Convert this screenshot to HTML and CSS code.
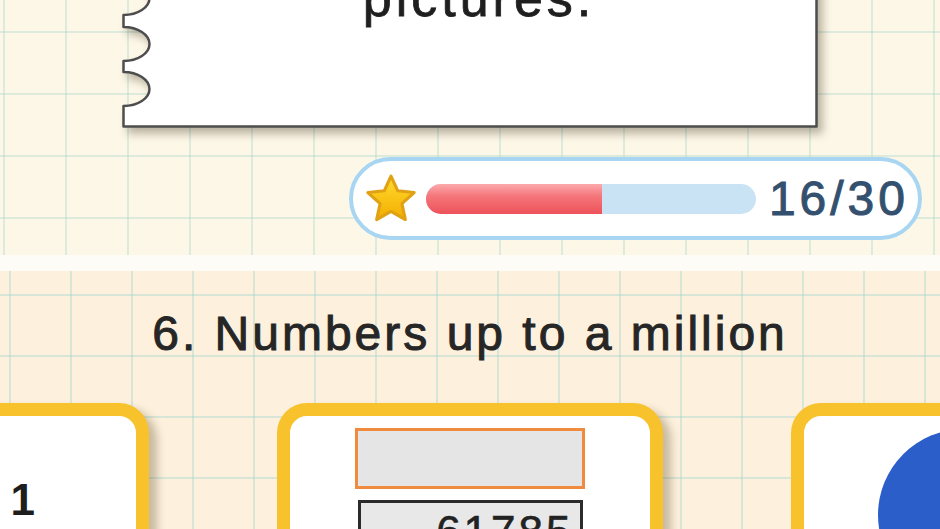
FILE: index.html
```html
<!DOCTYPE html>
<html lang="en">
<head>
  <meta charset="UTF-8" />
  <meta name="viewport" content="width=device-width, initial-scale=1.0"/>
  <title>Numbers up to a million</title>
  <link rel="stylesheet" href="styles.css">
</head>
<body>

<div class="screen screen-top">
  <div class="note">
    <!-- torn notebook page, notches along the left edge -->
    <svg class="note-shape" width="696" height="168" viewBox="0 0 696 168">
      <path d="M1.5 0 L694.5 0 L694.5 166.5 L1.5 166.5 L1.5 146
               A26 17 0 0 0 1.5 112 L1.5 101
               A26 17 0 0 0 1.5 67 L1.5 55
               A26 17 0 0 0 1.5 21 Z"
            fill="#fff" stroke="#4d4d4d" stroke-width="2.5" stroke-linejoin="round"/>
    </svg>
    <p class="note-text">pictures.</p>
  </div>

  <div class="progress">
    <svg class="star" width="54" height="54" viewBox="0 0 52 52">
      <defs>
        <linearGradient id="starFill" x1="0" y1="0" x2="0" y2="1">
          <stop offset="0" stop-color="#ffdc2e"/>
          <stop offset="1" stop-color="#f3ad00"/>
        </linearGradient>
      </defs>
      <polygon points="26,4 32.5,18.1 48.3,19.8 36.5,30.4 39.8,45.8 26,38 12.2,45.8 15.5,30.4 3.7,19.8 19.5,18.1"
               fill="url(#starFill)" stroke="#e0a214" stroke-width="3" stroke-linejoin="round"/>
    </svg>
    <div class="bar">
      <div class="bar-fill" style="width: 53.3%"></div>
    </div>
    <span class="count">16/30</span>
  </div>
</div>

<div class="screen screen-bottom">
  <h1 class="lesson-title">6. Numbers up to a million</h1>

  <div class="cards">
    <div class="card card-digits">
      <span>1</span>
      <span>3</span>
    </div>
    <div class="card card-boxes">
      <div class="answer-box"></div>
      <div class="number-box">61785</div>
    </div>
    <div class="card card-shape">
      <div class="dot"></div>
    </div>
  </div>
</div>

</body>
</html>
```

FILE: styles.css
```css
body {
  margin: 0;
  background: #fdfcf6;
  font-family: 'Liberation Sans', Arial, sans-serif;
  overflow: hidden;
}

.screen {
  overflow: hidden;
  display: flex;
  flex-direction: column;
}

/* graph paper */
.screen-top {
  height: 255px;
  background-color: #fdf7e7;
  background-image:
    linear-gradient(90deg, rgba(168, 214, 204, 0.38) 2px, transparent 2px),
    linear-gradient(rgba(168, 214, 204, 0.38) 2px, transparent 2px);
  background-size: 62px 62px;
  background-position: 3px 31px;
}

.screen-bottom {
  height: 258px;
  margin-top: 16px;
  background-color: #fdf1dd;
  background-image:
    linear-gradient(90deg, rgba(160, 212, 204, 0.4) 2px, transparent 2px),
    linear-gradient(rgba(160, 212, 204, 0.4) 2px, transparent 2px);
  background-size: 61px 61px;
  background-position: 9px 23px;
}

/* note card */
.note {
  position: relative;
  width: 696px;
  height: 168px;
  margin: -40px 0 0 122px;
  flex: 0 0 auto;
}

.note-shape {
  position: absolute;
  top: 0;
  left: 0;
  filter: drop-shadow(5px 6px 4px rgba(60, 50, 30, 0.35));
}

.note-text {
  position: relative;
  margin: 0;
  padding: 8px 0 0 18px;
  text-align: center;
  font-size: 52px;
  line-height: 60px;
  letter-spacing: 4px;
  color: #1f1f1f;
  -webkit-text-stroke: 0.8px #1f1f1f;
}

/* score pill */
.progress {
  align-self: flex-end;
  margin: 29px 18px 0 0;
  height: 83px;
  box-sizing: border-box;
  border: 4px solid #a8d6f2;
  border-radius: 42px;
  background: #fff;
  display: flex;
  align-items: center;
  padding: 0 9px 0 11px;
}

.star {
  flex: 0 0 auto;
}

.bar {
  width: 330px;
  height: 30px;
  margin-left: 8px;
  border-radius: 15px;
  background: #c9e3f5;
  overflow: hidden;
}

.bar-fill {
  height: 100%;
  background: linear-gradient(#fcaaad 0%, #f4767b 40%, #ee525a 100%);
}

.count {
  margin-left: 13px;
  font-size: 48px;
  letter-spacing: 4px;
  color: #34506f;
  -webkit-text-stroke: 1px #34506f;
}

/* lesson */
.lesson-title {
  margin: 0;
  padding-top: 35px;
  text-align: center;
  font-size: 48px;
  line-height: 56px;
  font-weight: normal;
  letter-spacing: 3px;
  color: #262626;
  -webkit-text-stroke: 1px #262626;
}

.cards {
  display: flex;
  justify-content: center;
  gap: 128px;
  margin-top: 41px;
}

.card {
  flex: 0 0 386px;
  height: 200px;
  box-sizing: border-box;
  border: 13px solid #f8c22c;
  border-radius: 30px;
  background: #fff;
  box-shadow: 8px 6px 8px rgba(80, 60, 20, 0.3);
}

.card-digits {
  display: flex;
  flex-direction: column;
  align-items: flex-end;
  padding: 59px 101px 0 0;
  font-size: 44px;
  line-height: 50px;
  font-weight: bold;
  color: #1e1e1e;
}

.card-boxes {
  display: flex;
  flex-direction: column;
  align-items: center;
  gap: 11px;
  padding-top: 12px;
}

.answer-box {
  width: 230px;
  height: 61px;
  box-sizing: border-box;
  border: 3px solid #ef8a3e;
  background: #e5e5e5;
}

.number-box {
  width: 225px;
  height: 60px;
  box-sizing: border-box;
  border: 3px solid #2b2b2b;
  background: #e8e8e8;
  padding: 4px 6px 0 0;
  text-align: right;
  font-size: 44px;
  line-height: 50px;
  letter-spacing: 3px;
  color: #222;
  -webkit-text-stroke: 0.6px #222;
}

.card-shape {
  padding: 13px 0 0 74px;
}

.dot {
  width: 172px;
  height: 172px;
  border-radius: 50%;
  background: #2b5ec9;
}
```
